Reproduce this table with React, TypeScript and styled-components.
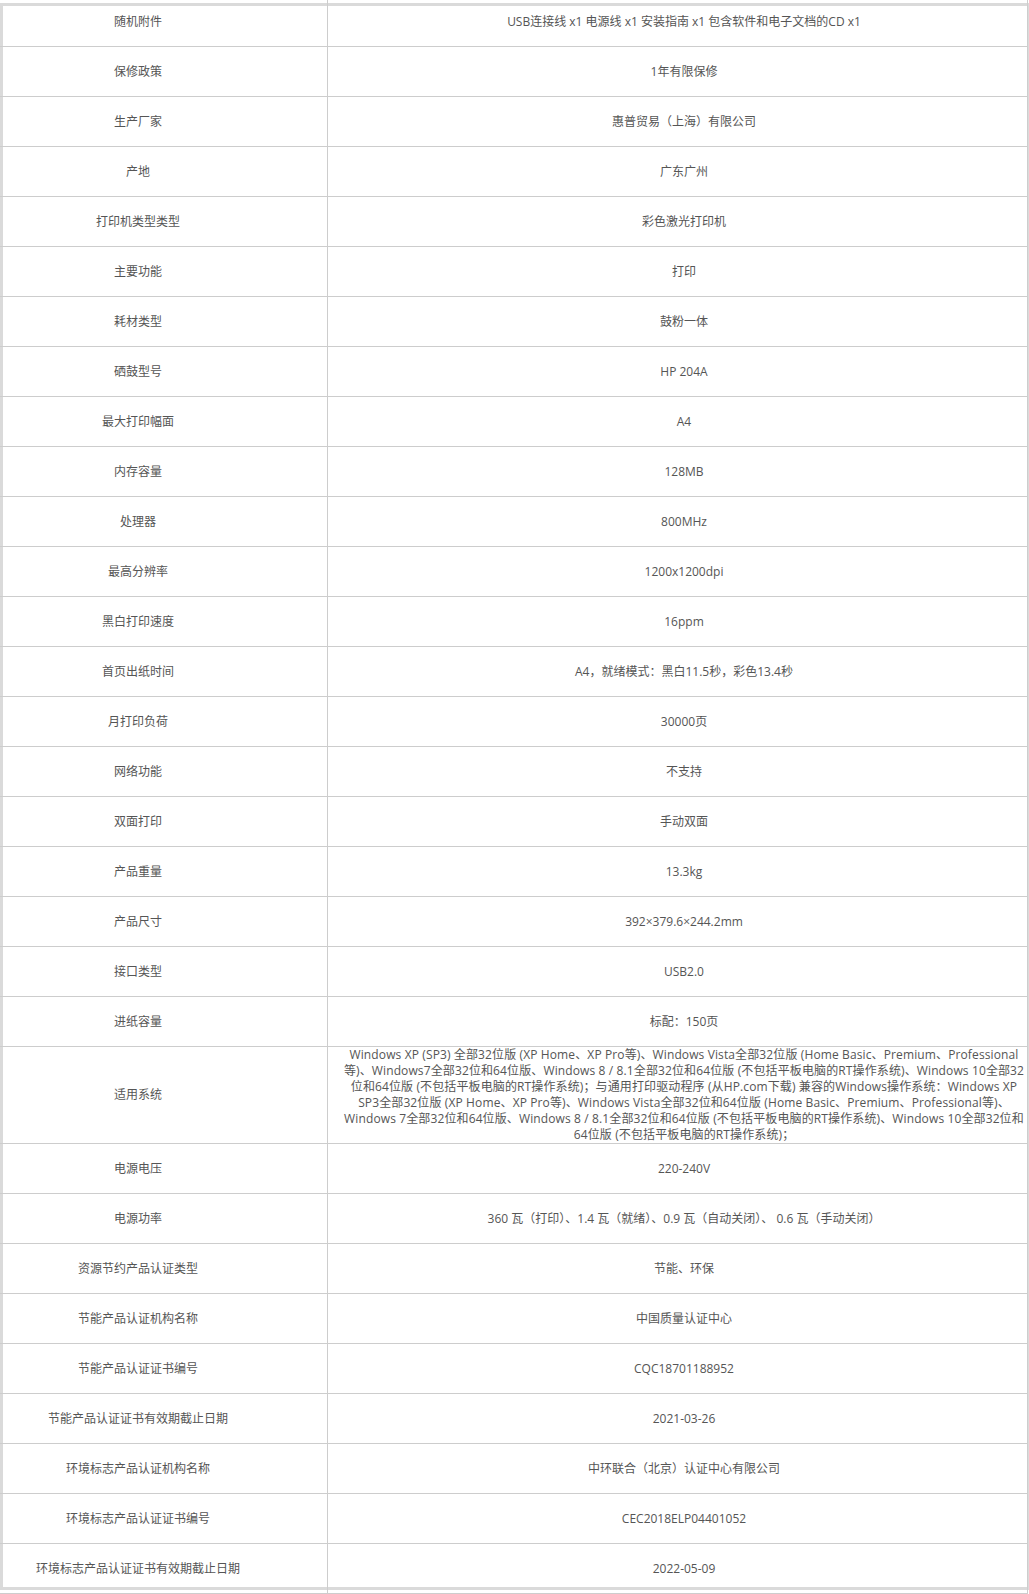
import React from "react";
import styled, { createGlobalStyle } from "styled-components";

type Spec = {
  label: string;
  value: string | string[];
};

const specs: Spec[] = [
  { label: "随机附件", value: "USB连接线 x1 电源线 x1 安装指南 x1 包含软件和电子文档的CD x1" },
  { label: "保修政策", value: "1年有限保修" },
  { label: "生产厂家", value: "惠普贸易（上海）有限公司" },
  { label: "产地", value: "广东广州" },
  { label: "打印机类型类型", value: "彩色激光打印机" },
  { label: "主要功能", value: "打印" },
  { label: "耗材类型", value: "鼓粉一体" },
  { label: "硒鼓型号", value: "HP 204A" },
  { label: "最大打印幅面", value: "A4" },
  { label: "内存容量", value: "128MB" },
  { label: "处理器", value: "800MHz" },
  { label: "最高分辨率", value: "1200x1200dpi" },
  { label: "黑白打印速度", value: "16ppm" },
  { label: "首页出纸时间", value: "A4，就绪模式：黑白11.5秒，彩色13.4秒" },
  { label: "月打印负荷", value: "30000页" },
  { label: "网络功能", value: "不支持" },
  { label: "双面打印", value: "手动双面" },
  { label: "产品重量", value: "13.3kg" },
  { label: "产品尺寸", value: "392×379.6×244.2mm" },
  { label: "接口类型", value: "USB2.0" },
  { label: "进纸容量", value: "标配：150页" },
  {
    label: "适用系统",
    value: [
      "Windows XP (SP3) 全部32位版 (XP Home、XP Pro等)、Windows Vista全部32位版 (Home Basic、Premium、Professional",
      "等)、Windows7全部32位和64位版、Windows 8 / 8.1全部32位和64位版 (不包括平板电脑的RT操作系统)、Windows 10全部32",
      "位和64位版 (不包括平板电脑的RT操作系统)；与通用打印驱动程序 (从HP.com下载) 兼容的Windows操作系统：Windows XP",
      "SP3全部32位版 (XP Home、XP Pro等)、Windows Vista全部32位和64位版 (Home Basic、Premium、Professional等)、",
      "Windows 7全部32位和64位版、Windows 8 / 8.1全部32位和64位版 (不包括平板电脑的RT操作系统)、Windows 10全部32位和",
      "64位版 (不包括平板电脑的RT操作系统)；",
    ],
  },
  { label: "电源电压", value: "220-240V" },
  { label: "电源功率", value: "360 瓦（打印）、1.4 瓦（就绪）、0.9 瓦（自动关闭）、 0.6 瓦（手动关闭）" },
  { label: "资源节约产品认证类型", value: "节能、环保" },
  { label: "节能产品认证机构名称", value: "中国质量认证中心" },
  { label: "节能产品认证证书编号", value: "CQC18701188952" },
  { label: "节能产品认证证书有效期截止日期", value: "2021-03-26" },
  { label: "环境标志产品认证机构名称", value: "中环联合（北京）认证中心有限公司" },
  { label: "环境标志产品认证证书编号", value: "CEC2018ELP04401052" },
  { label: "环境标志产品认证证书有效期截止日期", value: "2022-05-09" },
];

const GlobalStyle = createGlobalStyle`
  html, body {
    margin: 0;
    padding: 0;
    background: #fff;
  }
  body {
    font-family: "Open Sans", "Noto Sans CJK SC", sans-serif;
    font-size: 12px;
    color: #555;
  }
`;

const App = () => {
  return (
    <>
      <GlobalStyle />
      <Viewport>
        <SpecTable>
          {specs.map((spec) => (
            <React.Fragment key={spec.label}>
              <LabelCell>{spec.label}</LabelCell>
              <ValueCell>
                {Array.isArray(spec.value)
                  ? spec.value.map((line, i) => <Line key={i}>{line}</Line>)
                  : spec.value}
              </ValueCell>
            </React.Fragment>
          ))}
        </SpecTable>
      </Viewport>
    </>
  );
};

export default App;

const Viewport = styled.div`
  position: relative;
  width: 1029px;
  height: 1594px;
  overflow: hidden;

  /* grey frame of the scroll area, sits under the table lines */
  &::before {
    content: "";
    position: absolute;
    top: 3px;
    left: 0;
    width: 1029px;
    height: 1587px;
    box-sizing: border-box;
    border-style: solid;
    border-color: #dadada;
    border-width: 3px 2px 3px 3px;
    z-index: 0;
  }
`;

const SpecTable = styled.div`
  position: relative;
  z-index: 1;
  display: grid;
  grid-template-columns: 328px 700px;
  width: 1028px;
  margin-top: -4px;
  border-top: 1px solid #cdcdcd;
`;

const LabelCell = styled.div`
  display: flex;
  align-items: center;
  justify-content: center;
  box-sizing: border-box;
  min-height: 50px;
  padding: 0 51px 0 0;
  border-right: 1px solid #cdcdcd;
  border-bottom: 1px solid #cdcdcd;
  line-height: 16px;
  white-space: nowrap;
`;

const ValueCell = styled.div`
  display: flex;
  flex-direction: column;
  align-items: center;
  justify-content: center;
  box-sizing: border-box;
  min-height: 50px;
  padding: 0 0 0 13px;
  border-right: 1px solid #cdcdcd;
  border-bottom: 1px solid #cdcdcd;
  line-height: 16px;
  text-align: center;
`;

const Line = styled.span`
  display: block;
  white-space: nowrap;
  letter-spacing: 0.12px;
`;
